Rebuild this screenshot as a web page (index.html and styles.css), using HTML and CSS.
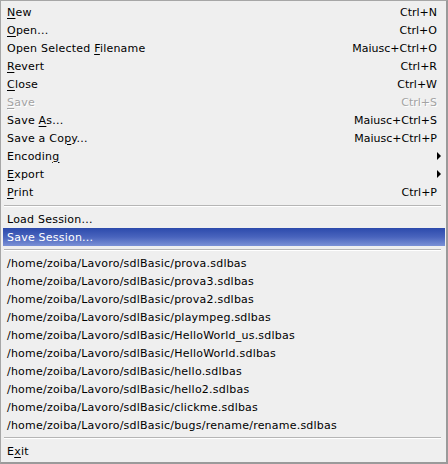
FILE: index.html
```html
<!DOCTYPE html>
<html>
<head>
<meta charset="utf-8">
<link rel="stylesheet" href="styles.css">
</head>
<body>
<div class="menu">
  <div class="item"><span class="label"><u>N</u>ew</span><span class="accel">Ctrl+N</span></div>
  <div class="item"><span class="label"><u>O</u>pen...</span><span class="accel">Ctrl+O</span></div>
  <div class="item"><span class="label">Open Selected <u>F</u>ilename</span><span class="accel">Maiusc+Ctrl+O</span></div>
  <div class="item"><span class="label"><u>R</u>evert</span><span class="accel">Ctrl+R</span></div>
  <div class="item"><span class="label"><u>C</u>lose</span><span class="accel">Ctrl+W</span></div>
  <div class="item disabled"><span class="label"><u>S</u>ave</span><span class="accel">Ctrl+S</span></div>
  <div class="item"><span class="label">Save <u>A</u>s...</span><span class="accel">Maiusc+Ctrl+S</span></div>
  <div class="item"><span class="label">Save a Co<u>p</u>y...</span><span class="accel">Maiusc+Ctrl+P</span></div>
  <div class="item"><span class="label">Encodin<u>g</u></span><span class="arrow"></span></div>
  <div class="item"><span class="label"><u>E</u>xport</span><span class="arrow"></span></div>
  <div class="item"><span class="label"><u>P</u>rint</span><span class="accel">Ctrl+P</span></div>
  <div class="sep sep-first"></div>
  <div class="item"><span class="label">Load Session...</span></div>
  <div class="item active"><span class="label">Save Session...</span></div>
  <div class="sep"></div>
  <div class="item"><span class="label">/home/zoiba/Lavoro/sdlBasic/prova.sdlbas</span></div>
  <div class="item"><span class="label">/home/zoiba/Lavoro/sdlBasic/prova3.sdlbas</span></div>
  <div class="item"><span class="label">/home/zoiba/Lavoro/sdlBasic/prova2.sdlbas</span></div>
  <div class="item"><span class="label">/home/zoiba/Lavoro/sdlBasic/plaympeg.sdlbas</span></div>
  <div class="item"><span class="label">/home/zoiba/Lavoro/sdlBasic/HelloWorld_us.sdlbas</span></div>
  <div class="item"><span class="label">/home/zoiba/Lavoro/sdlBasic/HelloWorld.sdlbas</span></div>
  <div class="item"><span class="label">/home/zoiba/Lavoro/sdlBasic/hello.sdlbas</span></div>
  <div class="item"><span class="label">/home/zoiba/Lavoro/sdlBasic/hello2.sdlbas</span></div>
  <div class="item"><span class="label">/home/zoiba/Lavoro/sdlBasic/clickme.sdlbas</span></div>
  <div class="item"><span class="label">/home/zoiba/Lavoro/sdlBasic/bugs/rename/rename.sdlbas</span></div>
  <div class="sep"></div>
  <div class="item"><span class="label">E<u>x</u>it</span></div>
</div>
</body>
</html>
```

FILE: styles.css
```css
html, body {
  margin: 0;
  padding: 0;
  background: #efefef;
}

.menu {
  box-sizing: border-box;
  width: 448px;
  height: 464px;
  background: #efefef;
  border-top: 1px solid #a6a6a6;
  border-left: 1px solid #a6a6a6;
  border-right: 2px solid #9a9a9a;
  border-bottom: 2px solid #9a9a9a;
  padding: 2px 1px 2px 2px;
  font-family: "DejaVu Sans", sans-serif;
  font-size: 11px;
  color: #000;
  display: flex;
  flex-direction: column;
}

.item {
  height: 18px;
  display: flex;
  align-items: center;
  justify-content: space-between;
  padding: 0 8px 0 4px;
  white-space: nowrap;
}

.label {
  letter-spacing: 0.22px;
}

.item u {
  text-decoration: underline;
  text-underline-offset: 2px;
  text-decoration-thickness: 1px;
}

.accel {
  color: #000;
}

.disabled .label,
.disabled .accel {
  color: #a3a3a3;
  text-shadow: 1px 1px 0 #ffffff;
}

.active {
  background: linear-gradient(to bottom, #2c4aac 0%, #4964bd 50%, #7b91d6 100%);
  color: #ffffff;
}

.arrow {
  width: 0;
  height: 0;
  border-top: 4px solid transparent;
  border-bottom: 4px solid transparent;
  border-left: 4px solid #000;
  margin-right: -4px;
}

.sep {
  height: 8px;
  display: flex;
  align-items: center;
  padding: 0 4px 0 1px;
}

.sep-first {
  height: 9px;
}

.sep::before {
  content: "";
  display: block;
  flex: 1;
  height: 1px;
  background: #b5b5b5;
  border-bottom: 1px solid #ffffff;
}
```
